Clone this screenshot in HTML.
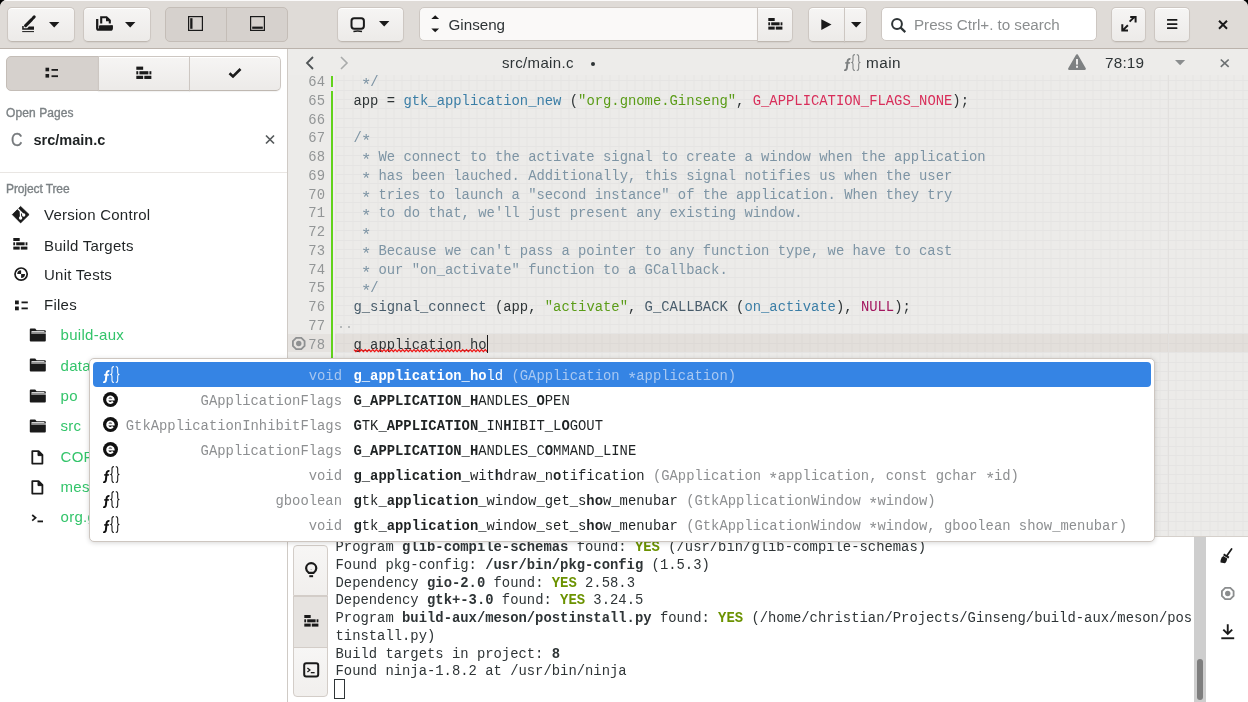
<!DOCTYPE html>
<html><head><meta charset="utf-8">
<style>
*{box-sizing:border-box;margin:0;padding:0}
html,body{width:1248px;height:702px;overflow:hidden;background:#000}
body{font-family:"Liberation Sans",sans-serif;color:#2e3436;position:relative}
.abs{position:absolute}
#win{will-change:transform;position:absolute;left:0;top:0;width:1248px;height:702px;background:#f6f5f4;border-radius:7px 7px 0 0;overflow:hidden}
#hb{position:absolute;left:0;top:0;width:1248px;height:49px;background:#dfdbd7;border-bottom:1px solid #bbb3ac;box-shadow:inset 0 1px #fbfafa}
.btn{position:absolute;top:6.5px;height:35px;border:1px solid #cdc7c2;border-bottom-color:#bfb8b1;border-radius:5px;background:linear-gradient(to top,#edebe9 2px,#f6f5f4);box-shadow:inset 0 1px #fff,0 1px 1px rgba(0,0,0,.05)}
.chk{background:#d6d1cd;border-color:#c4bdb7;box-shadow:none}
.entry{position:absolute;top:7px;height:34px;border:1px solid #cdc7c2;border-radius:5px;background:#fff}
svg{position:absolute;overflow:visible}
#side{position:absolute;left:0;top:49px;width:288px;height:653px;background:#fff;border-right:1px solid #cfcac5}
#edhdr{position:absolute;left:288px;top:49px;width:960px;height:26px;background:#edecea}
#editor{position:absolute;left:288px;top:75px;width:960px;height:461px;background:#ecebe9}

#editor{overflow:hidden}
#grid{position:absolute;left:0;top:0;width:960px;height:466px;
 background-image:repeating-linear-gradient(to right,transparent 0,transparent 7.32px,#e5e4e3 7.32px,#e5e4e3 8.32px),
 repeating-linear-gradient(to bottom,transparent 0,transparent 8.375px,#e5e4e3 8.375px,#e5e4e3 9.375px);
 background-position:-1.5px 0, 0 -3.0px}
#curline{position:absolute;left:0;top:259px;width:960px;height:17.8px;background:rgba(120,85,60,.075)}
#gutter{position:absolute;left:0;top:0;width:45px;height:466px;background:#ecebe9}
#gcur{position:absolute;left:0;top:259px;width:43px;height:17.8px;background:#e5e2df}
#rmargin{position:absolute;left:879.5px;top:0;width:1px;height:466px;background:#e2e0de}
.num{position:absolute;left:0;width:37px;text-align:right;font-family:"Liberation Mono",monospace;font-size:13.86px;line-height:18.75px;color:#929596}
.ln{position:absolute;left:48.85px;white-space:pre;font-family:"Liberation Mono",monospace;font-size:13.86px;line-height:18.75px;color:#2e3436}
.gbar{position:absolute;left:43px;width:2px;background:#62d21c}
.c{color:#7d94a4}.f{color:#3b7ea6}.s{color:#5a9c17}.k{color:#d82e5a}.m{color:#485c6b}.n{color:#a3165f}
.sq{text-decoration:underline wavy #e01b24;text-decoration-thickness:1px;text-underline-offset:2px}

.t{position:absolute;white-space:pre}

#popup{position:absolute;left:89px;top:358px;width:1066px;height:183.5px;background:#fff;border:1px solid #cdc6c0;border-radius:5px;box-shadow:0 1px 5px rgba(0,0,0,.16)}
#psel{position:absolute;left:93px;top:362px;width:1058px;height:25px;background:#3584e4;border-radius:4px}
.t b{font-weight:bold}
.ast{font-style:normal;display:inline-block;transform:translateY(3.3px) scale(1.25)}


#panel{position:absolute;left:288px;top:536px;width:960px;height:166px;background:#fff;border-top:1px solid #d5d0cb}
#term{position:absolute;left:-288px;top:-536px;width:1248px;height:702px}
#ptabs{position:absolute;left:5px;top:8px;width:35px;height:152px}
.ptab{position:absolute;left:0;width:35px;border:1px solid #d3cdc8;background:linear-gradient(to top,#f1efed,#f7f6f5)}
.ptab.act{background:#e6e3e0;border-color:#d3cdc8}
#trough{position:absolute;left:906.3px;top:0;width:11.7px;height:166px;background:#cecece}
#slider{position:absolute;left:908.8px;top:121.5px;width:6px;height:41.5px;background:#7e7e7e;border-radius:3px}

.mono{font-family:"Liberation Mono",monospace}
</style></head><body>
<svg width="0" height="0" style="position:absolute"><defs><symbol id="bricks" viewBox="0 0 15 12"><rect x="0.3" y="0" width="6.4" height="3" fill="#1a1a1a"/><rect x="0.3" y="4.3" width="1.8" height="3" fill="#1a1a1a"/><rect x="3.2" y="4.3" width="8.4" height="3" fill="#1a1a1a"/><rect x="12.6" y="4.3" width="1.8" height="3" fill="#1a1a1a"/><rect x="0.3" y="8.6" width="6.4" height="3" fill="#1a1a1a"/><rect x="7.8" y="8.6" width="6.6" height="3" fill="#1a1a1a"/></symbol><symbol id="fn" viewBox="0 0 17 17"><path d="M6.4 5.3C5.2 4.6 3.9 5.2 3.6 7.2L2.9 13.8C2.7 15.6 1.7 16.6 0.3 15.8" fill="none" stroke="currentColor" stroke-width="2"/><path d="M1.2 8.9H5.9" stroke="currentColor" stroke-width="1.6"/><path d="M10.9 0.6C9.5 0.6 9 1.1 9 2.6V6.6C9 7.6 8.6 8.3 8 8.5C8.6 8.7 9 9.4 9 10.4V14.4C9 15.9 9.5 16.4 10.9 16.4M12.8 0.6C14.2 0.6 14.7 1.1 14.7 2.6V6.6C14.7 7.6 15.1 8.3 15.7 8.5C15.1 8.7 14.7 9.4 14.7 10.4V14.4C14.7 15.9 14.2 16.4 12.8 16.4" fill="none" stroke="currentColor" stroke-width="1.05"/></symbol></defs></svg>
<div id="win">
<div id="hb">
  <div class="btn" style="left:7px;width:68px"></div>
  <div class="btn" style="left:82.8px;width:68.5px"></div>
  <div class="btn chk" style="left:165px;width:62px;border-radius:5px 0 0 5px"></div>
  <div class="btn chk" style="left:226px;width:62px;border-radius:0 5px 5px 0"></div>
  <div class="btn" style="left:337px;width:67px"></div>
  <div class="entry" style="left:419px;width:339px;border-radius:5px 0 0 5px;background:#faf9f8"></div>
  <div class="btn" style="left:757px;width:36px;border-radius:0 5px 5px 0"></div>
  <div class="btn" style="left:808px;width:37px;border-radius:5px 0 0 5px"></div>
  <div class="btn" style="left:844px;width:23px;border-radius:0 5px 5px 0"></div>
  <div class="entry" style="left:881px;width:216px"></div>
  <div class="btn" style="left:1110.7px;width:35.6px"></div>
  <div class="btn" style="left:1154px;width:36px"></div>
<svg style="left:22px;top:15px" width="13" height="18" viewBox="0 0 13 18"><path d="M3.6 10.6L9.6 4.6" stroke="#1a1a1a" stroke-width="3.1" stroke-linecap="round"/><path d="M10.9 3.2L12.2 1.9" stroke="#1a1a1a" stroke-width="3" stroke-linecap="round"/><path d="M0.2 11H1.7V13.2H5.3L6.9 11.6H12V14.8H0.2Z" fill="#1a1a1a"/><rect x="0.2" y="16.1" width="11.8" height="1" fill="#1a1a1a"/></svg><svg style="left:48.9px;top:21.6px" width="10.4" height="5.6" viewBox="0 0 10.4 5.6"><path d="M0 0H10.4L5.2 5.6Z" fill="#1a1a1a"/></svg><svg style="left:96px;top:16px" width="17" height="15" viewBox="0 0 17 15"><path d="M1.2 3V12.2Q1.2 13.6 2.6 13.6H14.4Q15.8 13.6 15.8 12.2V9.2" fill="none" stroke="#1a1a1a" stroke-width="2.3"/><rect x="3" y="9.2" width="13" height="4.6" rx="1" fill="#1a1a1a"/><path d="M5.2 7.5V1.2H10.5L13.8 4.5V7.5" fill="none" stroke="#1a1a1a" stroke-width="2.1"/><path d="M10 1.2V5.2H14" fill="#1a1a1a"/></svg><svg style="left:125px;top:21.6px" width="10.4" height="5.6" viewBox="0 0 10.4 5.6"><path d="M0 0H10.4L5.2 5.6Z" fill="#1a1a1a"/></svg><svg style="left:188px;top:16.3px" width="15" height="15" viewBox="0 0 15 15"><rect x="0.6" y="0.6" width="13.8" height="13.8" fill="none" stroke="#1a1a1a" stroke-width="1.2"/><rect x="2.2" y="2.2" width="2.3" height="10.6" fill="#1a1a1a"/></svg><svg style="left:249.6px;top:16.3px" width="15" height="15" viewBox="0 0 15 15"><rect x="0.6" y="0.6" width="13.8" height="13.8" fill="none" stroke="#1a1a1a" stroke-width="1.2"/><rect x="2.2" y="10.6" width="10.6" height="2.2" fill="#1a1a1a"/></svg><svg style="left:350px;top:16.5px" width="16" height="16" viewBox="0 0 16 16"><rect x="1.5" y="1.3" width="12.4" height="10.4" rx="2.6" fill="none" stroke="#1a1a1a" stroke-width="2"/><path d="M3.4 14.5Q7.7 13.6 12 14.5" stroke="#1a1a1a" stroke-width="1.6" fill="none"/></svg><svg style="left:378.8px;top:21.4px" width="10.4" height="5.6" viewBox="0 0 10.4 5.6"><path d="M0 0H10.4L5.2 5.6Z" fill="#1a1a1a"/></svg><svg style="left:430.5px;top:15px" width="9" height="18" viewBox="0 0 9 18"><path d="M0.3 3.9L4.2 0.2L8.1 3.9Z" fill="#1a1a1a"/><path d="M0.3 13.4L4.2 17.2L8.1 13.4Z" fill="#1a1a1a"/></svg><div class="t" style="left:448.5px;top:14.83px;font-size:15.2px;line-height:20px;color:#2e3436;letter-spacing:0px">Ginseng</div><svg style="left:768px;top:17.6px" width="15" height="12" viewBox="0 0 15 12"><use href="#bricks"/></svg><svg style="left:821px;top:18.6px" width="11" height="11.2" viewBox="0 0 11 11.2"><path d="M0.3 0.2L10.5 5.6L0.3 11Z" fill="#1a1a1a"/></svg><svg style="left:850.6px;top:21.9px" width="10.4" height="5.6" viewBox="0 0 10.4 5.6"><path d="M0 0H10.4L5.2 5.6Z" fill="#1a1a1a"/></svg><svg style="left:891px;top:17.5px" width="16" height="15" viewBox="0 0 16 15"><circle cx="6" cy="6" r="4.9" fill="none" stroke="#2e3436" stroke-width="2"/><path d="M9.4 9.4L14.3 14.1" stroke="#2e3436" stroke-width="2.2"/></svg><div class="t" style="left:914px;top:14.83px;font-size:15.2px;line-height:20px;color:#8b8e8f;letter-spacing:-0.03px">Press Ctrl+. to search</div><svg style="left:1120.5px;top:16.3px" width="16" height="15.5" viewBox="0 0 16 15.5"><path d="M8.6 5.6L13 1.4M9.2 1.1H14.6V6.5" fill="none" stroke="#1a1a1a" stroke-width="2"/><path d="M6.9 9.3L2.2 13.9M1.3 8.2V14.5H7" fill="none" stroke="#1a1a1a" stroke-width="2"/></svg><svg style="left:1166.8px;top:18.7px" width="11" height="11" viewBox="0 0 11 11"><rect x="0" y="0" width="10.4" height="1.8" rx="0.5" fill="#1a1a1a"/><rect x="0" y="4.2" width="10.4" height="1.8" rx="0.5" fill="#1a1a1a"/><rect x="0" y="8.3" width="10.4" height="1.8" rx="0.5" fill="#1a1a1a"/></svg><svg style="left:1218px;top:19.5px" width="10" height="9.5" viewBox="0 0 10 9.5"><path d="M1 0.8L9 8.7M9 0.8L1 8.7" stroke="#1a1a1a" stroke-width="2"/></svg>
</div>
<div id="side"></div>
<div class="btn chk" style="left:6px;top:55.5px;height:35px;width:93px;border-radius:5px 0 0 5px"></div><div class="btn" style="left:98px;top:55.5px;height:35px;width:92px;border-radius:0"></div><div class="btn" style="left:189px;top:55.5px;height:35px;width:92px;border-radius:0 5px 5px 0"></div><svg style="left:45px;top:67px" width="14" height="12" viewBox="0 0 14 12"><rect x="0.5" y="0.7" width="3.6" height="3.6" fill="#1c1c1c"/><rect x="0.5" y="7" width="3.6" height="3.6" fill="#1c1c1c"/><rect x="6.5" y="2" width="6.5" height="1.8" fill="#1c1c1c"/><rect x="6.5" y="8.3" width="6.5" height="1.8" fill="#1c1c1c"/></svg><svg style="left:136px;top:66px" width="16" height="14" viewBox="0 0 16 14" class="bricks"><use href="#bricks"/></svg><svg style="left:228px;top:67px" width="14" height="12" viewBox="0 0 14 12"><path d="M1.5 6.2L5 9.5L12.5 2" fill="none" stroke="#1c1c1c" stroke-width="2.6"/></svg><div class="t" style="left:6px;top:103.14px;font-size:12px;line-height:20px;color:#7c8285;letter-spacing:0.1px;-webkit-text-stroke:0.35px #7c8285">Open Pages</div><div class="t" style="left:10.8px;top:129.76px;font-size:18px;line-height:20px;color:#75797c;transform:scaleX(0.88);transform-origin:left;-webkit-text-stroke:0.3px #75797c">C</div><div class="t" style="left:33.5px;top:129.88px;font-size:14.5px;line-height:20px;color:#1f2324;font-weight:bold">src/main.c</div><svg style="left:265px;top:135px" width="10" height="9" viewBox="0 0 10 9"><path d="M1 0.5L9 8.5M9 0.5L1 8.5" stroke="#555a5c" stroke-width="1.7"/></svg><div class="abs" style="left:0;top:172px;width:287px;height:1px;background:#e9e6e3"></div><div class="t" style="left:6px;top:179.14px;font-size:12px;line-height:20px;color:#7c8285;letter-spacing:-0.1px;-webkit-text-stroke:0.35px #7c8285">Project Tree</div><div class="t" style="left:44px;top:205.30px;font-size:15px;line-height:20px;color:#1f2324;letter-spacing:0.25px">Version Control</div><div class="t" style="left:44px;top:235.80px;font-size:15px;line-height:20px;color:#1f2324;letter-spacing:0.25px">Build Targets</div><div class="t" style="left:44px;top:265.10px;font-size:15px;line-height:20px;color:#1f2324;letter-spacing:0.25px">Unit Tests</div><div class="t" style="left:44px;top:295.10px;font-size:15px;line-height:20px;color:#1f2324;letter-spacing:0.25px">Files</div><svg style="left:12px;top:205.5px" width="18" height="17" viewBox="0 0 18 17"><path d="M8.6 0.4L17.1 8.6L8.6 16.9L0.3 8.6Z" fill="#1a1a1a" stroke="#1a1a1a" stroke-width="0.8" stroke-linejoin="round"/><path d="M5.8 2.8L8.3 5.2L8.6 11.8M8.9 5.8L11.6 8.9" stroke="#fff" stroke-width="1.3" fill="none"/><circle cx="8.6" cy="12" r="1.7" fill="#fff"/><circle cx="11.7" cy="9" r="1.7" fill="#fff"/></svg><svg style="left:13px;top:238px" width="15" height="12" viewBox="0 0 15 12" ><use href="#bricks"/></svg><svg style="left:13.5px;top:267px" width="15" height="15" viewBox="0 0 15 15"><circle cx="7.1" cy="7.1" r="6.1" fill="none" stroke="#1a1a1a" stroke-width="1.7"/><path d="M7.1 7.1L7.1 3.2A3.9 3.9 0 0 0 3.2 7.1Z" fill="#1a1a1a"/><path d="M7.1 7.1L7.1 11A3.9 3.9 0 0 0 11 7.1Z" fill="#1a1a1a"/></svg><svg style="left:14.5px;top:299.5px" width="14" height="11" viewBox="0 0 14 11"><rect x="0" y="0.5" width="3.8" height="3.8" fill="#1a1a1a"/><rect x="0" y="6.5" width="3.8" height="3.8" fill="#1a1a1a"/><rect x="6.5" y="1.5" width="6.3" height="1.8" fill="#1a1a1a"/><rect x="6.5" y="7.5" width="6.3" height="1.8" fill="#1a1a1a"/></svg><div class="t" style="left:60.5px;top:325.40px;font-size:15px;line-height:20px;color:#33c46a;letter-spacing:0.3px">build-aux</div><svg style="left:29px;top:328.0px" width="18" height="14" viewBox="0 0 18 14"><path d="M0.8 1.5Q0.8 0.6 1.7 0.6H6.2L7.6 2.2H15.8Q16.8 2.2 16.8 3.2V4.4H2.3V5.5H16.8V12.5Q16.8 13.4 15.9 13.4H1.7Q0.8 13.4 0.8 12.5Z" fill="#1a1a1a"/><path d="M2.5 3.6H15.4" stroke="#fff" stroke-width="0.9"/></svg><div class="t" style="left:60.5px;top:355.70px;font-size:15px;line-height:20px;color:#33c46a;letter-spacing:0.3px">data</div><svg style="left:29px;top:358.3px" width="18" height="14" viewBox="0 0 18 14"><path d="M0.8 1.5Q0.8 0.6 1.7 0.6H6.2L7.6 2.2H15.8Q16.8 2.2 16.8 3.2V4.4H2.3V5.5H16.8V12.5Q16.8 13.4 15.9 13.4H1.7Q0.8 13.4 0.8 12.5Z" fill="#1a1a1a"/><path d="M2.5 3.6H15.4" stroke="#fff" stroke-width="0.9"/></svg><div class="t" style="left:60.5px;top:386.00px;font-size:15px;line-height:20px;color:#33c46a;letter-spacing:0.3px">po</div><svg style="left:29px;top:388.6px" width="18" height="14" viewBox="0 0 18 14"><path d="M0.8 1.5Q0.8 0.6 1.7 0.6H6.2L7.6 2.2H15.8Q16.8 2.2 16.8 3.2V4.4H2.3V5.5H16.8V12.5Q16.8 13.4 15.9 13.4H1.7Q0.8 13.4 0.8 12.5Z" fill="#1a1a1a"/><path d="M2.5 3.6H15.4" stroke="#fff" stroke-width="0.9"/></svg><div class="t" style="left:60.5px;top:416.30px;font-size:15px;line-height:20px;color:#33c46a;letter-spacing:0.3px">src</div><svg style="left:29px;top:418.9px" width="18" height="14" viewBox="0 0 18 14"><path d="M0.8 1.5Q0.8 0.6 1.7 0.6H6.2L7.6 2.2H15.8Q16.8 2.2 16.8 3.2V4.4H2.3V5.5H16.8V12.5Q16.8 13.4 15.9 13.4H1.7Q0.8 13.4 0.8 12.5Z" fill="#1a1a1a"/><path d="M2.5 3.6H15.4" stroke="#fff" stroke-width="0.9"/></svg><div class="t" style="left:60.5px;top:446.60px;font-size:15px;line-height:20px;color:#33c46a;letter-spacing:0.3px">COPYING</div><svg style="left:31px;top:449.8px" width="13" height="15" viewBox="0 0 13 15"><path d="M1.3 1.2H7.6L11.4 5V13.6H1.3Z" fill="none" stroke="#1a1a1a" stroke-width="1.8" stroke-linejoin="round"/><path d="M7 1.2V5.6H11.4" fill="#1a1a1a" stroke="#1a1a1a" stroke-width="1"/></svg><div class="t" style="left:60.5px;top:476.90px;font-size:15px;line-height:20px;color:#33c46a;letter-spacing:0.3px">meson.build</div><svg style="left:31px;top:480.1px" width="13" height="15" viewBox="0 0 13 15"><path d="M1.3 1.2H7.6L11.4 5V13.6H1.3Z" fill="none" stroke="#1a1a1a" stroke-width="1.8" stroke-linejoin="round"/><path d="M7 1.2V5.6H11.4" fill="#1a1a1a" stroke="#1a1a1a" stroke-width="1"/></svg><div class="t" style="left:60.5px;top:507.20px;font-size:15px;line-height:20px;color:#33c46a;letter-spacing:0.3px">org.gnome.Ginseng.json</div><svg style="left:31px;top:513.8px" width="14" height="10" viewBox="0 0 14 10"><path d="M1.2 1L4.6 3.8L1.2 6.6" fill="none" stroke="#1a1a1a" stroke-width="1.7"/><rect x="6.5" y="6.5" width="5.5" height="1.8" fill="#1a1a1a"/></svg>
<div id="edhdr"><svg style="left:17px;top:7px" width="10" height="14" viewBox="0 0 10 14"><path d="M8 1L2 7L8 13" fill="none" stroke="#4f5456" stroke-width="1.8"/></svg><svg style="left:51px;top:7px" width="10" height="14" viewBox="0 0 10 14"><path d="M2 1L8 7L2 13" fill="none" stroke="#a9abab" stroke-width="1.6"/></svg></div><div class="t" style="left:502px;top:52.70px;font-size:15px;line-height:20px;color:#2e3436;letter-spacing:0.35px">src/main.c</div><div class="abs" style="left:590.5px;top:61.5px;width:4.5px;height:4.5px;border-radius:50%;background:#2e3436"></div><div class="t" style="left:866px;top:52.60px;font-size:15.3px;line-height:20px;color:#2e3436;letter-spacing:0.45px">main</div><div class="t" style="left:1105px;top:52.60px;font-size:15.3px;line-height:20px;color:#2e3436;letter-spacing:0.2px">78:19</div>

<div id="editor">
  <div id="grid"></div>
  <div id="curline"></div>
  <div id="gutter"></div>
  <div id="gcur"></div>
  <div id="rmargin"></div>
<div class="num" style="top:-1.90px">64</div>
<div class="num" style="top:16.85px">65</div>
<div class="num" style="top:35.60px">66</div>
<div class="num" style="top:54.35px">67</div>
<div class="num" style="top:73.10px">68</div>
<div class="num" style="top:91.85px">69</div>
<div class="num" style="top:110.60px">70</div>
<div class="num" style="top:129.35px">71</div>
<div class="num" style="top:148.10px">72</div>
<div class="num" style="top:166.85px">73</div>
<div class="num" style="top:185.60px">74</div>
<div class="num" style="top:204.35px">75</div>
<div class="num" style="top:223.10px">76</div>
<div class="num" style="top:241.85px">77</div>
<div class="num" style="top:260.60px">78</div>
<div class="ln" style="top:-1.90px"><span class="c">   <i class="ast">*</i>/</span></div>
<div class="ln" style="top:16.85px">  app = <span class="f">gtk_application_new</span> (<span class="s">"org.gnome.Ginseng"</span>, <span class="k">G_APPLICATION_FLAGS_NONE</span>);</div>
<div class="ln" style="top:35.60px"></div>
<div class="ln" style="top:54.35px"><span class="c">  /<i class="ast">*</i></span></div>
<div class="ln" style="top:73.10px"><span class="c">   <i class="ast">*</i> We connect to the activate signal to create a window when the application</span></div>
<div class="ln" style="top:91.85px"><span class="c">   <i class="ast">*</i> has been lauched. Additionally, this signal notifies us when the user</span></div>
<div class="ln" style="top:110.60px"><span class="c">   <i class="ast">*</i> tries to launch a "second instance" of the application. When they try</span></div>
<div class="ln" style="top:129.35px"><span class="c">   <i class="ast">*</i> to do that, we'll just present any existing window.</span></div>
<div class="ln" style="top:148.10px"><span class="c">   <i class="ast">*</i></span></div>
<div class="ln" style="top:166.85px"><span class="c">   <i class="ast">*</i> Because we can't pass a pointer to any function type, we have to cast</span></div>
<div class="ln" style="top:185.60px"><span class="c">   <i class="ast">*</i> our "on_activate" function to a GCallback.</span></div>
<div class="ln" style="top:204.35px"><span class="c">   <i class="ast">*</i>/</span></div>
<div class="ln" style="top:223.10px">  <span class="m">g_signal_connect</span> (app, <span class="s">"activate"</span>, <span class="m">G_CALLBACK</span> (<span class="f">on_activate</span>), <span class="n">NULL</span>);</div>
<div class="ln" style="top:241.85px"></div>
<div class="ln" style="top:260.60px">  g_application_ho</div>
  <div class="abs" style="left:45px;top:0;width:2px;height:461px;background:#f2ecf1"></div><div class="gbar" style="top:0.8px;height:11.5px"></div>
  <div class="gbar" style="top:15.5px;height:283px"></div>
</div>

<div id="panel"><div id="term"><div class="t mono" style="left:335.5px;top:538.24px;font-size:13.86px;line-height:17.75px;color:#2e3436">Program <b>glib-compile-schemas</b> found: <b style="color:#6b9200">YES</b> (/usr/bin/glib-compile-schemas)</div><div class="t mono" style="left:335.5px;top:555.99px;font-size:13.86px;line-height:17.75px;color:#2e3436">Found pkg-config: <b>/usr/bin/pkg-config</b> (1.5.3)</div><div class="t mono" style="left:335.5px;top:573.74px;font-size:13.86px;line-height:17.75px;color:#2e3436">Dependency <b>gio-2.0</b> found: <b style="color:#6b9200">YES</b> 2.58.3</div><div class="t mono" style="left:335.5px;top:591.49px;font-size:13.86px;line-height:17.75px;color:#2e3436">Dependency <b>gtk+-3.0</b> found: <b style="color:#6b9200">YES</b> 3.24.5</div><div class="t mono" style="left:335.5px;top:609.24px;font-size:13.86px;line-height:17.75px;color:#2e3436">Program <b>build-aux/meson/postinstall.py</b> found: <b style="color:#6b9200">YES</b> (/home/christian/Projects/Ginseng/build-aux/meson/pos</div><div class="t mono" style="left:335.5px;top:626.99px;font-size:13.86px;line-height:17.75px;color:#2e3436">tinstall.py)</div><div class="t mono" style="left:335.5px;top:644.74px;font-size:13.86px;line-height:17.75px;color:#2e3436">Build targets in project: <b>8</b></div><div class="t mono" style="left:335.5px;top:662.49px;font-size:13.86px;line-height:17.75px;color:#2e3436">Found ninja-1.8.2 at /usr/bin/ninja</div><div class="abs" style="left:334px;top:678px;width:10.5px;height:20px;border:1px solid #2e3436"></div></div><div id="ptabs"><div class="ptab" style="top:0;height:51px;border-radius:4px 4px 0 0"></div><div class="ptab act" style="top:50.5px;height:52px"></div><div class="ptab" style="top:102px;height:50px;border-radius:0 0 4px 4px"></div></div><div id="trough"></div><div id="slider"></div></div>
<svg style="left:844px;top:54px;color:#7d8081" width="17" height="17" viewBox="0 0 17 17"><use href="#fn"/></svg><svg style="left:1067.5px;top:53.8px" width="18" height="16.2" viewBox="0 0 18 16.2"><path d="M9 1.3L16.8 14.9H1.2Z" fill="#7e8182" stroke="#7e8182" stroke-width="2.2" stroke-linejoin="round"/><rect x="8" y="5" width="2" height="5.6" fill="#eeedec"/><rect x="8" y="11.8" width="2" height="2" fill="#eeedec"/></svg><svg style="left:1174.5px;top:60.3px" width="10.2" height="5.3" viewBox="0 0 10.2 5.3"><path d="M0 0H10.2L5.1 5.3Z" fill="#8a8d8e"/></svg><svg style="left:1219.5px;top:58.8px" width="9.5" height="8.3" viewBox="0 0 9.5 8.3"><path d="M0.8 0.5L8.7 7.8M8.7 0.5L0.8 7.8" stroke="#6d7173" stroke-width="1.7"/></svg><svg style="left:292px;top:337px" width="13.5" height="13" viewBox="0 0 13.5 13"><path d="M4.2 0.9H9.3L12.6 4.2V8.8L9.3 12.1H4.2L0.9 8.8V4.2Z" fill="none" stroke="#8e9091" stroke-width="1.8"/><circle cx="6.75" cy="6.5" r="2.7" fill="#8e9091"/></svg><div class="abs" style="left:339.6px;top:325.9px;width:2.2px;height:2.2px;border-radius:50%;background:#a5a8aa"></div><div class="abs" style="left:348px;top:325.9px;width:2.2px;height:2.2px;border-radius:50%;background:#a5a8aa"></div><svg style="left:353.5px;top:348.8px" width="135" height="4" viewBox="0 0 135 4"><polyline points="0.00,0.6 1.88,2.6 3.75,0.6 5.62,2.6 7.50,0.6 9.38,2.6 11.25,0.6 13.12,2.6 15.00,0.6 16.88,2.6 18.75,0.6 20.62,2.6 22.50,0.6 24.38,2.6 26.25,0.6 28.12,2.6 30.00,0.6 31.88,2.6 33.75,0.6 35.62,2.6 37.50,0.6 39.38,2.6 41.25,0.6 43.12,2.6 45.00,0.6 46.88,2.6 48.75,0.6 50.62,2.6 52.50,0.6 54.38,2.6 56.25,0.6 58.12,2.6 60.00,0.6 61.88,2.6 63.75,0.6 65.62,2.6 67.50,0.6 69.38,2.6 71.25,0.6 73.12,2.6 75.00,0.6 76.88,2.6 78.75,0.6 80.62,2.6 82.50,0.6 84.38,2.6 86.25,0.6 88.12,2.6 90.00,0.6 91.88,2.6 93.75,0.6 95.62,2.6 97.50,0.6 99.38,2.6 101.25,0.6 103.12,2.6 105.00,0.6 106.88,2.6 108.75,0.6 110.62,2.6 112.50,0.6 114.38,2.6 116.25,0.6 118.12,2.6 120.00,0.6 121.88,2.6 123.75,0.6 125.62,2.6 127.50,0.6 129.38,2.6 131.25,0.6 133.12,2.6" fill="none" stroke="#f01010" stroke-width="1.2"/></svg><div class="abs" style="left:487px;top:335px;width:1.2px;height:18px;background:#1a1a1a"></div><svg style="left:305px;top:562.8px" width="13" height="15.2" viewBox="0 0 13 15.2"><path d="M3.8 9.8C2.2 8.7 1.1 7.2 1.1 5.3A5.1 5.1 0 0 1 11.3 5.3C11.3 7.2 10.2 8.7 8.6 9.8Z" fill="none" stroke="#1a1a1a" stroke-width="2.2" stroke-linejoin="round"/><rect x="4.3" y="12.2" width="3.8" height="2" fill="#1a1a1a"/><path d="M5.2 6.2H7.2L6.2 7.2Z" fill="#999"/></svg><svg style="left:303.5px;top:614.5px" width="15" height="12" viewBox="0 0 15 12"><use href="#bricks"/></svg><svg style="left:302.5px;top:662.2px" width="17" height="16" viewBox="0 0 17 16"><rect x="1.2" y="1.2" width="14" height="13.4" rx="2" fill="none" stroke="#1a1a1a" stroke-width="2"/><path d="M4.4 6L6.9 8L4.4 10" fill="none" stroke="#1a1a1a" stroke-width="1.3"/><rect x="7.8" y="10" width="3.8" height="1.3" fill="#1a1a1a"/></svg><svg style="left:1219.5px;top:548px" width="13" height="16" viewBox="0 0 13 16"><path d="M11.6 0.9L7.2 7.3" stroke="#1a1a1a" stroke-width="1.7" stroke-linecap="round"/><path d="M3.6 6.4L8.9 9.6" stroke="#1a1a1a" stroke-width="1.9"/><path d="M3.3 8.1L7.3 10.5C6.8 13 5.8 14.8 4.8 15.2L0.5 14.6C0.2 12.6 1.2 9.6 3.3 8.1Z" fill="#1a1a1a"/></svg><svg style="left:1220.5px;top:587.3px" width="13.5" height="13" viewBox="0 0 13.5 13"><path d="M4.2 0.9H9.3L12.6 4.2V8.8L9.3 12.1H4.2L0.9 8.8V4.2Z" fill="none" stroke="#8b8d8e" stroke-width="1.8"/><circle cx="6.75" cy="6.5" r="2.7" fill="#8b8d8e"/></svg><svg style="left:1220.5px;top:623.5px" width="13.5" height="15.5" viewBox="0 0 13.5 15.5"><path d="M6.75 0.3V9.5M2.3 5.6L6.75 10L11.2 5.6" fill="none" stroke="#1a1a1a" stroke-width="1.9"/><rect x="0.3" y="13.3" width="12.9" height="1.9" fill="#1a1a1a"/></svg>
<div id="popup"></div><div id="psel"></div><div class="t mono" style="left:93px;width:249px;text-align:right;top:363.51px;font-size:13.86px;line-height:25px;color:#a8c6ef">void</div><div class="t mono" style="left:353.45px;top:363.51px;font-size:13.86px;line-height:25px;color:#ffffff"><b>g_application_ho</b>ld<span style="color:#a8c8f2"> (GApplication <i class="ast">*</i>application)</span></div><svg style="left:103px;top:366px;color:#ffffff" width="17" height="17" viewBox="0 0 17 17"><use href="#fn"/></svg><div class="t mono" style="left:93px;width:249px;text-align:right;top:388.51px;font-size:13.86px;line-height:25px;color:#8d8f91">GApplicationFlags</div><div class="t mono" style="left:353.45px;top:388.51px;font-size:13.86px;line-height:25px;color:#1f2324"><b>G_APPLICATION_H</b>ANDLES_<b>O</b>PEN<span style="color:#8d8f91"></span></div><svg style="left:103px;top:392px" width="15" height="15" viewBox="0 0 15 15"><circle cx="7.5" cy="7.5" r="7.5" fill="#111"/><path d="M4.3 7.4H10.6A3.2 3.2 0 1 0 9.9 9.7" fill="none" stroke="#fff" stroke-width="2"/></svg><div class="t mono" style="left:93px;width:249px;text-align:right;top:413.51px;font-size:13.86px;line-height:25px;color:#8d8f91">GtkApplicationInhibitFlags</div><div class="t mono" style="left:353.45px;top:413.51px;font-size:13.86px;line-height:25px;color:#1f2324"><b>G</b>TK<b>_APPLICATION_</b>IN<b>H</b>IBIT_L<b>O</b>GOUT<span style="color:#8d8f91"></span></div><svg style="left:103px;top:417px" width="15" height="15" viewBox="0 0 15 15"><circle cx="7.5" cy="7.5" r="7.5" fill="#111"/><path d="M4.3 7.4H10.6A3.2 3.2 0 1 0 9.9 9.7" fill="none" stroke="#fff" stroke-width="2"/></svg><div class="t mono" style="left:93px;width:249px;text-align:right;top:438.51px;font-size:13.86px;line-height:25px;color:#8d8f91">GApplicationFlags</div><div class="t mono" style="left:353.45px;top:438.51px;font-size:13.86px;line-height:25px;color:#1f2324"><b>G_APPLICATION_H</b>ANDLES_C<b>O</b>MMAND_LINE<span style="color:#8d8f91"></span></div><svg style="left:103px;top:442px" width="15" height="15" viewBox="0 0 15 15"><circle cx="7.5" cy="7.5" r="7.5" fill="#111"/><path d="M4.3 7.4H10.6A3.2 3.2 0 1 0 9.9 9.7" fill="none" stroke="#fff" stroke-width="2"/></svg><div class="t mono" style="left:93px;width:249px;text-align:right;top:463.51px;font-size:13.86px;line-height:25px;color:#8d8f91">void</div><div class="t mono" style="left:353.45px;top:463.51px;font-size:13.86px;line-height:25px;color:#1f2324"><b>g_application_</b>wit<b>h</b>draw_n<b>o</b>tification<span style="color:#8d8f91"> (GApplication <i class="ast">*</i>application, const gchar <i class="ast">*</i>id)</span></div><svg style="left:103px;top:466px;color:#111" width="17" height="17" viewBox="0 0 17 17"><use href="#fn"/></svg><div class="t mono" style="left:93px;width:249px;text-align:right;top:488.51px;font-size:13.86px;line-height:25px;color:#8d8f91">gboolean</div><div class="t mono" style="left:353.45px;top:488.51px;font-size:13.86px;line-height:25px;color:#1f2324"><b>g</b>tk<b>_application_</b>window_get_s<b>ho</b>w_menubar<span style="color:#8d8f91"> (GtkApplicationWindow <i class="ast">*</i>window)</span></div><svg style="left:103px;top:491px;color:#111" width="17" height="17" viewBox="0 0 17 17"><use href="#fn"/></svg><div class="t mono" style="left:93px;width:249px;text-align:right;top:513.51px;font-size:13.86px;line-height:25px;color:#8d8f91">void</div><div class="t mono" style="left:353.45px;top:513.51px;font-size:13.86px;line-height:25px;color:#1f2324"><b>g</b>tk<b>_application_</b>window_set_s<b>ho</b>w_menubar<span style="color:#8d8f91"> (GtkApplicationWindow <i class="ast">*</i>window, gboolean show_menubar)</span></div><svg style="left:103px;top:516px;color:#111" width="17" height="17" viewBox="0 0 17 17"><use href="#fn"/></svg>
</div>
</body></html>
